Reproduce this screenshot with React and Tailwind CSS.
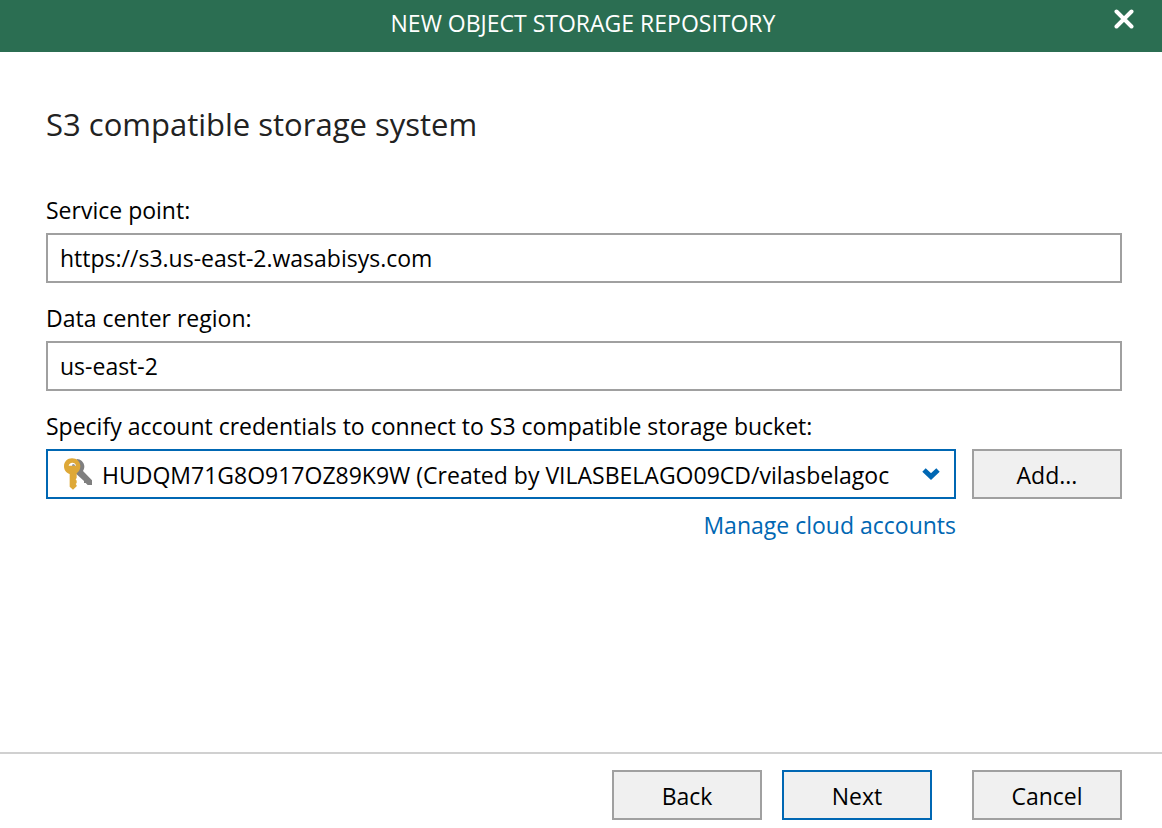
import React from "react";

const accounts = ["HUDQM71G8O917OZ89K9W (Created by VILASBELAGO09CD/vilasbelagoc"];

function CloseIcon() {
  return (
    <svg viewBox="0 0 20 20" className="w-5 h-5" fill="none" stroke="currentColor" strokeWidth="4" strokeLinecap="round">
      <path d="M2.5 2.5 17.5 17.5M17.5 2.5 2.5 17.5" />
    </svg>
  );
}

function KeyIcon({ className }) {
  return (
    <svg viewBox="0 0 108 114" className={className} aria-hidden="true">
      <path fill="#7f7f7f" d="M50 12C62 12 72 22 73 33C73 39 72 43 69 48L96 76V90H83L77 84H72V78L48 56Z" />
      <path
        fill="#dea837"
        fillRule="evenodd"
        d="M36 10C50 10 61 20 61 34C61 44 56 51 50 55V69L47 73L50 77V84L47 87L50 91V94L39 104L29 95V57C18 54 12 45 12 34C12 20 22 10 36 10ZM26 32H48C47 26 43 23 37 23C31 23 27 27 26 32Z"
      />
      <path fill="#7f7f7f" d="M36 32C37 27 42 26 46 32Z" />
    </svg>
  );
}

function ChevronIcon({ className }) {
  return (
    <svg viewBox="0 0 18 12" className={className} fill="none" stroke="#0067b3" strokeWidth="5" aria-hidden="true">
      <path d="M2 2 9 8.5 16 2" />
    </svg>
  );
}

function TextField({ id, label, value }) {
  return (
    <div className="flex flex-col gap-[5px]">
      <label htmlFor={id} className="leading-9">
        {label}
      </label>
      <input id={id} type="text" defaultValue={value} className="w-full h-[50px] px-3 border-2 border-[#a0a0a0] bg-white" />
    </div>
  );
}

function Button({ primary, children }) {
  return (
    <button
      type="button"
      className={`w-[150px] h-[50px] pt-0.5 shrink-0 border-2 bg-[#f0f0f0] ${primary ? "border-[#0067b3]" : "border-[#a0a0a0]"}`}
    >
      {children}
    </button>
  );
}

function App() {
  return (
    <div className="min-h-screen flex flex-col bg-white text-black text-[23px] font-['Open_Sans',sans-serif]">
      {/* Title bar */}
      <header className="h-[52px] shrink-0 flex bg-[#2b6e52] text-white">
        <div className="w-20 shrink-0" />
        <h1 className="flex-1 text-center leading-[46px]">NEW OBJECT STORAGE REPOSITORY</h1>
        <button type="button" aria-label="Close" className="w-12 h-[38px] shrink-0 mr-7 flex items-center justify-end">
          <CloseIcon />
        </button>
      </header>

      {/* Account step */}
      <main className="flex-1 pl-[46px] pr-10 pt-12">
        <h2 className="text-[31px] leading-[48px] text-[#222222]">S3 compatible storage system</h2>

        <div className="mt-11 flex flex-col gap-[17px]">
          <TextField id="service-point" label="Service point:" value="https://s3.us-east-2.wasabisys.com" />
          <TextField id="region" label="Data center region:" value="us-east-2" />

          <div className="flex flex-col gap-[5px]">
            <label htmlFor="credentials" className="leading-9">
              Specify account credentials to connect to S3 compatible storage bucket:
            </label>
            <div className="flex items-start gap-4">
              <div className="flex-1 min-w-0">
                <div className="relative">
                  <select
                    id="credentials"
                    className="block w-full h-[50px] pt-0.5 appearance-none border-2 border-[#0067b3] bg-white pl-[54px] pr-16"
                  >
                    {accounts.map((account) => (
                      <option key={account}>{account}</option>
                    ))}
                  </select>
                  <KeyIcon className="absolute left-3.5 top-1.5 w-9 h-[38px] pointer-events-none" />
                  <ChevronIcon className="absolute right-4 top-[19px] w-[18px] h-3 pointer-events-none" />
                </div>
                <div className="mt-2 text-right leading-9">
                  <a href="#accounts" className="text-[#0067b3]">
                    Manage cloud accounts
                  </a>
                </div>
              </div>
              <Button>Add...</Button>
            </div>
          </div>
        </div>
      </main>

      {/* Wizard navigation */}
      <footer className="flex justify-end gap-10 border-t-2 border-[#d0d0d0] pt-4 pb-2 pr-10">
        <div className="flex gap-5">
          <Button>Back</Button>
          <Button primary>Next</Button>
        </div>
        <Button>Cancel</Button>
      </footer>
    </div>
  );
}

export default App;
